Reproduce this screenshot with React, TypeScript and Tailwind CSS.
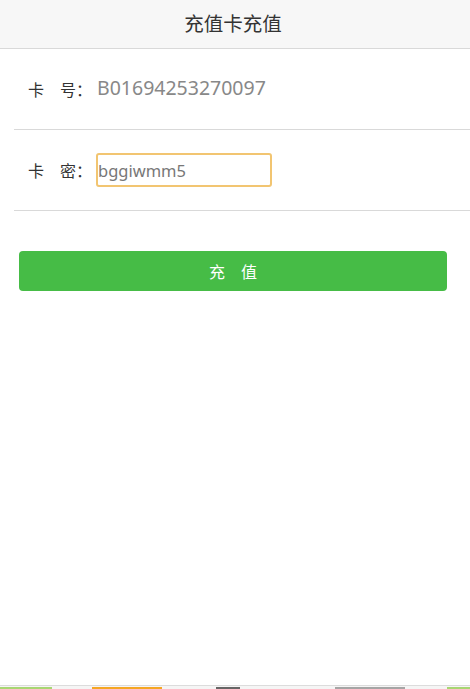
import React, { useState } from 'react';

const cjk = { fontFamily: '"Noto Sans CJK SC", "Noto Sans", sans-serif' };
const latin = { fontFamily: '"Noto Sans", "Noto Sans CJK SC", sans-serif' };

const App: React.FC = () => {
  const [pwd, setPwd] = useState('bggiwmm5');

  return (
    <div className="h-[689px] overflow-hidden bg-white" style={cjk}>
      <div className="h-[685px]">
        <header className="h-[49px] bg-[#f7f7f7] border-b border-[#d9d9d9] flex items-center justify-center">
          <h1 className="text-[19.5px] text-[#333] leading-none -mt-[2px] -ml-[4px]">充值卡充值</h1>
        </header>

        <div className="ml-[14px] pl-[14px] h-[81px] border-b border-[#d9d9d9] flex items-center">
          <span className="text-[16px] text-[#333] w-[69px] -mt-[1px]">卡　号：</span>
          <span className="text-[19.5px] text-[#888] leading-none -mt-[2px]" style={latin}>
            B01694253270097
          </span>
        </div>

        <div className="ml-[14px] pl-[14px] h-[81px] border-b border-[#d9d9d9] flex items-center">
          <span className="text-[16px] text-[#333] w-[68px] -mt-[1px]">卡　密：</span>
          <input
            autoFocus
            value={pwd}
            onChange={(e) => setPwd(e.target.value)}
            className="w-[176px] h-[34px] border-2 border-[#f2c571] rounded-[3px] px-0 text-[16.5px] text-[#777] caret-[#333] outline-none leading-none"
            style={latin}
          />
        </div>

        <div className="pt-[40px]">
          <button className="ml-[19px] w-[428px] h-[40px] rounded-[4px] bg-[#46bc46] text-white text-[16px]">
            充　值
          </button>
        </div>
      </div>

      <nav className="h-[55px] border-t border-[#dcdcdc] bg-[#f5f5f5] flex items-start pt-[1px]">
        <div className="w-[52px] h-[3px] bg-[#a8d672]" />
        <div className="ml-[40px] w-[70px] h-[3px] bg-[#f5a623]" />
        <div className="ml-[54px] w-[24px] h-[3px] bg-[#2a2a2a] opacity-70" />
        <div className="ml-[95px] w-[70px] h-[3px] bg-[#555] opacity-50" />
        <div className="ml-auto w-[23px] h-[3px] bg-[#a8d672]" />
      </nav>
    </div>
  );
};

export default App;
